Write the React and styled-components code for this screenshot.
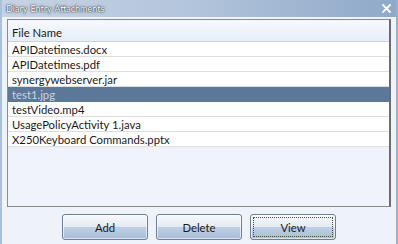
import React from 'react';
import styled, { createGlobalStyle } from 'styled-components';

const GlobalStyle = createGlobalStyle`
    html, body {
        margin: 0;
        padding: 0;
        background: #eef2f9;
    }
`;

const Window = styled.div`
    width: 398px;
    height: 244px;
    box-sizing: border-box;
    display: flex;
    flex-direction: column;
    background: #eef2f9;
    border-left: 2px solid #a9c1dd;
    border-right: 2px solid #93b1d4;
    font-family: Lato, "Open Sans", sans-serif;
    font-size: 11.3px;
    color: #1a1a1a;
`;

const TitleBar = styled.div`
    height: 17px;
    flex: none;
    display: flex;
    align-items: center;
    justify-content: space-between;
    padding: 0 5px 0 4px;
    background: linear-gradient(to right, #c6d3e3 0%, #b4c6dc 45%, #8fa9c8 100%);
`;

const Title = styled.span`
    color: #ffffff;
    font-size: 9px;
    word-spacing: 1px;
    text-shadow: 0 0 1px #2c3848, 0 0 1px #2c3848, 0 0 3px #5a6a7e;
`;

const CloseIcon = styled.svg`
    width: 9px;
    height: 9px;
    display: block;
`;

const Body = styled.div`
    flex: 1;
    display: flex;
    flex-direction: column;
    padding: 2px 5px 4px 5px;
`;

const Grid = styled.div`
    height: 188px;
    box-sizing: border-box;
    display: flex;
    flex-direction: column;
    background: #f0f3f9;
    border: 1px solid #8d8d8d;
    border-right: 2px solid #6c6c6c;
    border-bottom-color: #8a8a8a;
`;

const HeaderCell = styled.div`
    height: 21px;
    box-sizing: border-box;
    display: flex;
    align-items: center;
    padding: 2px 0 0 4px;
    background: linear-gradient(to bottom, #f6f9fd 0%, #e6eef8 100%);
    border-bottom: 1px solid #c9d2de;
    margin-top: 1px;
`;

const Row = styled.div`
    height: 15px;
    box-sizing: border-box;
    display: flex;
    align-items: center;
    padding: 1px 0 0 4px;
    background: ${p => (p.selected ? '#5c7898' : '#ffffff')};
    color: ${p => (p.selected ? '#c9d2de' : '#1a1a1a')};
    border-bottom: 1px solid ${p => (p.selected ? '#5c7898' : '#dedede')};
    white-space: nowrap;
`;

const ButtonBar = styled.div`
    display: flex;
    justify-content: center;
    gap: 8px;
    margin-top: 7px;
`;

const Button = styled.button`
    width: 86px;
    height: 26px;
    box-sizing: border-box;
    padding: 0;
    border: 1px solid #6e7f95;
    border-radius: 3px;
    font-family: inherit;
    font-size: 11.3px;
    color: #1a1a1a;
    background: linear-gradient(to bottom, #f7f9fc 0%, #e5ebf3 48%, #c0d0e4 52%, #a8bdd8 100%);
    box-shadow: inset 0 0 0 1px rgba(255, 255, 255, 0.6);
    position: relative;

    &.focused::after {
        content: '';
        position: absolute;
        inset: 2px;
        border: 1px dotted #4a4a4a;
        border-radius: 1px;
    }
`;

const files = [
    'APIDatetimes.docx',
    'APIDatetimes.pdf',
    'synergywebserver.jar',
    'test1.jpg',
    'testVideo.mp4',
    'UsagePolicyActivity 1.java',
    'X250Keyboard Commands.pptx',
];

const App = () => {
    return <>
        <GlobalStyle />
        <Window>
            <TitleBar>
                <Title>Diary Entry Attachments</Title>
                <CloseIcon viewBox="0 0 9 9">
                    <path d="M1 1 L8 8 M8 1 L1 8" stroke="#ffffff" strokeWidth="1.8" strokeLinecap="square" />
                </CloseIcon>
            </TitleBar>
            <Body>
                <Grid>
                    <HeaderCell>File Name</HeaderCell>
                    {files.map(name => (
                        <Row key={name} selected={name === 'test1.jpg'}>{name}</Row>
                    ))}
                </Grid>
                <ButtonBar>
                    <Button>Add</Button>
                    <Button>Delete</Button>
                    <Button className="focused">View</Button>
                </ButtonBar>
            </Body>
        </Window>
    </>;
};

export default App;
